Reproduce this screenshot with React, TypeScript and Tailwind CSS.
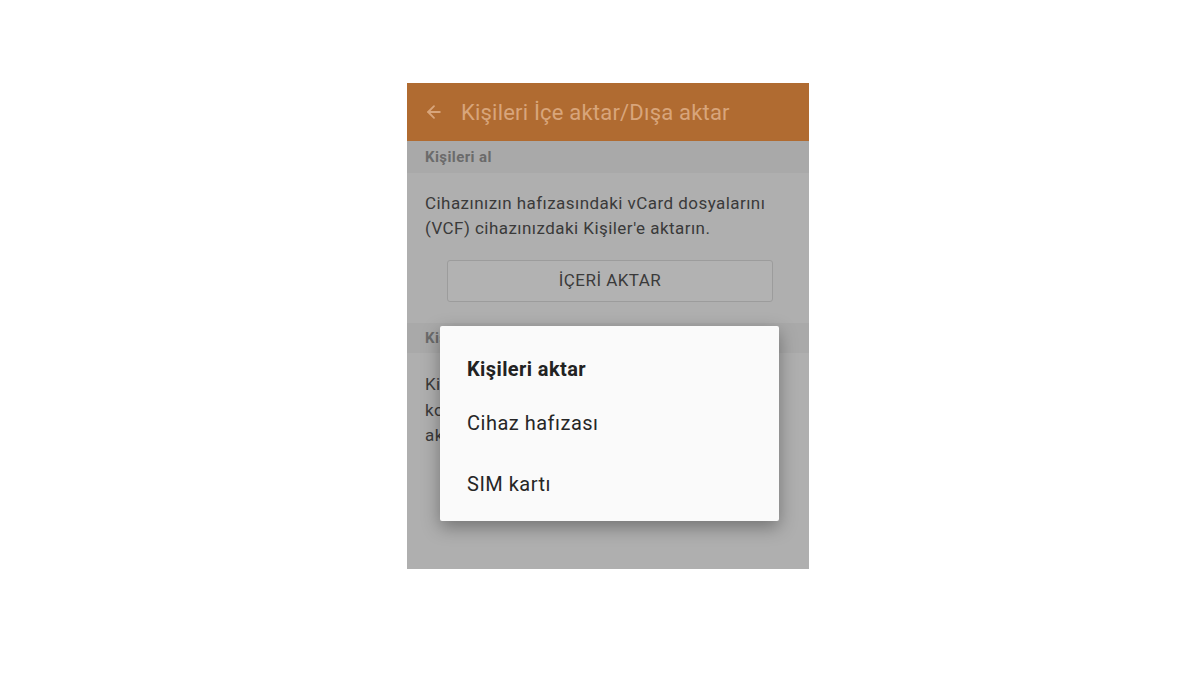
import { ArrowLeft } from 'lucide-react'

export default function App() {
  return (
    <div className="w-[1200px] h-[675px] bg-white overflow-hidden" style={{ fontFamily: 'Roboto, "Noto Sans", sans-serif' }}>
      <div className="relative ml-[407px] mt-[83px] w-[402px] h-[486px] bg-[#afafaf] overflow-hidden">
        {/* app bar */}
        <div className="h-[58px] bg-[#b06b31] flex items-center pl-[17px] gap-[17px]">
          <ArrowLeft className="w-[20px] h-[20px] text-[#d8a57b]" strokeWidth={2.2} />
          <span className="text-[22px] text-[#d8a57b] tracking-[0.2px]">Kişileri İçe aktar/Dışa aktar</span>
        </div>

        {/* import section */}
        <div className="h-[32px] bg-[#a9a9a9] flex items-center pl-[18px]">
          <span className="text-[15px] font-bold text-[#6b6b6b] tracking-[0.4px]">Kişileri al</span>
        </div>
        <div className="px-[18px] pt-[18px]">
          <p className="text-[17px] leading-[25px] text-[#3a3a3a] tracking-[0.45px]">
            Cihazınızın hafızasındaki vCard dosyalarını<br />
            (VCF) cihazınızdaki Kişiler'e aktarın.
          </p>
          <div className="mt-[19px] ml-[22px] w-[326px] h-[42px] border border-[#9c9c9c] rounded-[3px] bg-[#b2b2b2] flex items-center justify-center">
            <span className="text-[17px] text-[#3a3a3a] tracking-[0.45px]">İÇERİ AKTAR</span>
          </div>
        </div>

        {/* export section */}
        <div className="mt-[21px] h-[30px] bg-[#a9a9a9] flex items-center pl-[18px]">
          <span className="text-[15px] font-bold text-[#6b6b6b] whitespace-nowrap tracking-[0.4px]">Kişileri ver</span>
        </div>
        <div className="px-[18px] pt-[19px]">
          <p className="text-[17px] leading-[25.5px] text-[#3a3a3a] whitespace-nowrap tracking-[0.45px]">
            Kişilerinizi cihazınızın hafızasındaki bir<br />
            konuma vCard dosyası (VCF) olarak<br />
            aktarın.
          </p>
        </div>

        {/* dialog */}
        <div className="absolute left-[33px] top-[243px] w-[339px] h-[195px] bg-[#fafafa] rounded-[2px] shadow-[0_6px_18px_rgba(0,0,0,0.35)] pl-[27px] pt-[30px]">
          <div className="text-[20px] font-bold text-[#222222] leading-[26px] tracking-[0.4px]">Kişileri aktar</div>
          <div className="mt-[28px] text-[20px] text-[#262626] leading-[26px] tracking-[0.5px]">Cihaz hafızası</div>
          <div className="mt-[35px] text-[20px] text-[#262626] leading-[26px] tracking-[0.5px]">SIM kartı</div>
        </div>
      </div>
    </div>
  )
}
